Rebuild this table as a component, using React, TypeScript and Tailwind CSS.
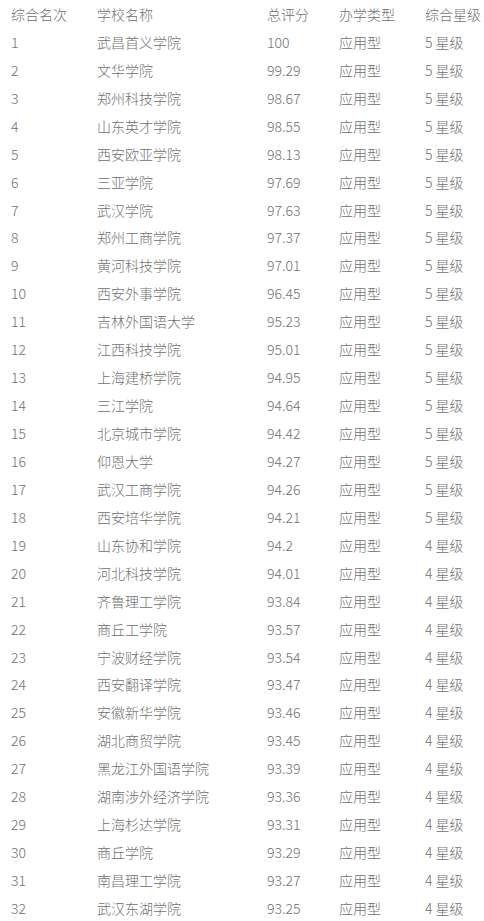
const rows: [string, string, string][] = [
  ['1', '武昌首义学院', '100'],
  ['2', '文华学院', '99.29'],
  ['3', '郑州科技学院', '98.67'],
  ['4', '山东英才学院', '98.55'],
  ['5', '西安欧亚学院', '98.13'],
  ['6', '三亚学院', '97.69'],
  ['7', '武汉学院', '97.63'],
  ['8', '郑州工商学院', '97.37'],
  ['9', '黄河科技学院', '97.01'],
  ['10', '西安外事学院', '96.45'],
  ['11', '吉林外国语大学', '95.23'],
  ['12', '江西科技学院', '95.01'],
  ['13', '上海建桥学院', '94.95'],
  ['14', '三江学院', '94.64'],
  ['15', '北京城市学院', '94.42'],
  ['16', '仰恩大学', '94.27'],
  ['17', '武汉工商学院', '94.26'],
  ['18', '西安培华学院', '94.21'],
  ['19', '山东协和学院', '94.2'],
  ['20', '河北科技学院', '94.01'],
  ['21', '齐鲁理工学院', '93.84'],
  ['22', '商丘工学院', '93.57'],
  ['23', '宁波财经学院', '93.54'],
  ['24', '西安翻译学院', '93.47'],
  ['25', '安徽新华学院', '93.46'],
  ['26', '湖北商贸学院', '93.45'],
  ['27', '黑龙江外国语学院', '93.39'],
  ['28', '湖南涉外经济学院', '93.36'],
  ['29', '上海杉达学院', '93.31'],
  ['30', '商丘学院', '93.29'],
  ['31', '南昌理工学院', '93.27'],
  ['32', '武汉东湖学院', '93.25'],
];

function Row({ cells }: { cells: string[] }) {
  return (
    <div className="flex h-[27.94px] items-center">
      <div className="w-[86px] pl-[11px]">{cells[0]}</div>
      <div className="w-[170px] pl-[11px]">{cells[1]}</div>
      <div className="w-[72px] pl-[11px]">{cells[2]}</div>
      <div className="w-[86px] pl-[11px]">{cells[3]}</div>
      <div className="flex-1 pl-[11px]">{cells[4]}</div>
    </div>
  );
}

export default function App() {
  return (
    <div className="w-[484px] h-[921px] overflow-hidden bg-white text-[14px] leading-none font-light text-[#707070] font-['Microsoft_YaHei','Noto_Sans_CJK_SC',sans-serif]">
      <Row cells={['综合名次', '学校名称', '总评分', '办学类型', '综合星级']} />
      {rows.map((r) => (
        <Row key={r[0]} cells={[r[0], r[1], r[2], '应用型', Number(r[0]) <= 18 ? '5 星级' : '4 星级']} />
      ))}
    </div>
  );
}
